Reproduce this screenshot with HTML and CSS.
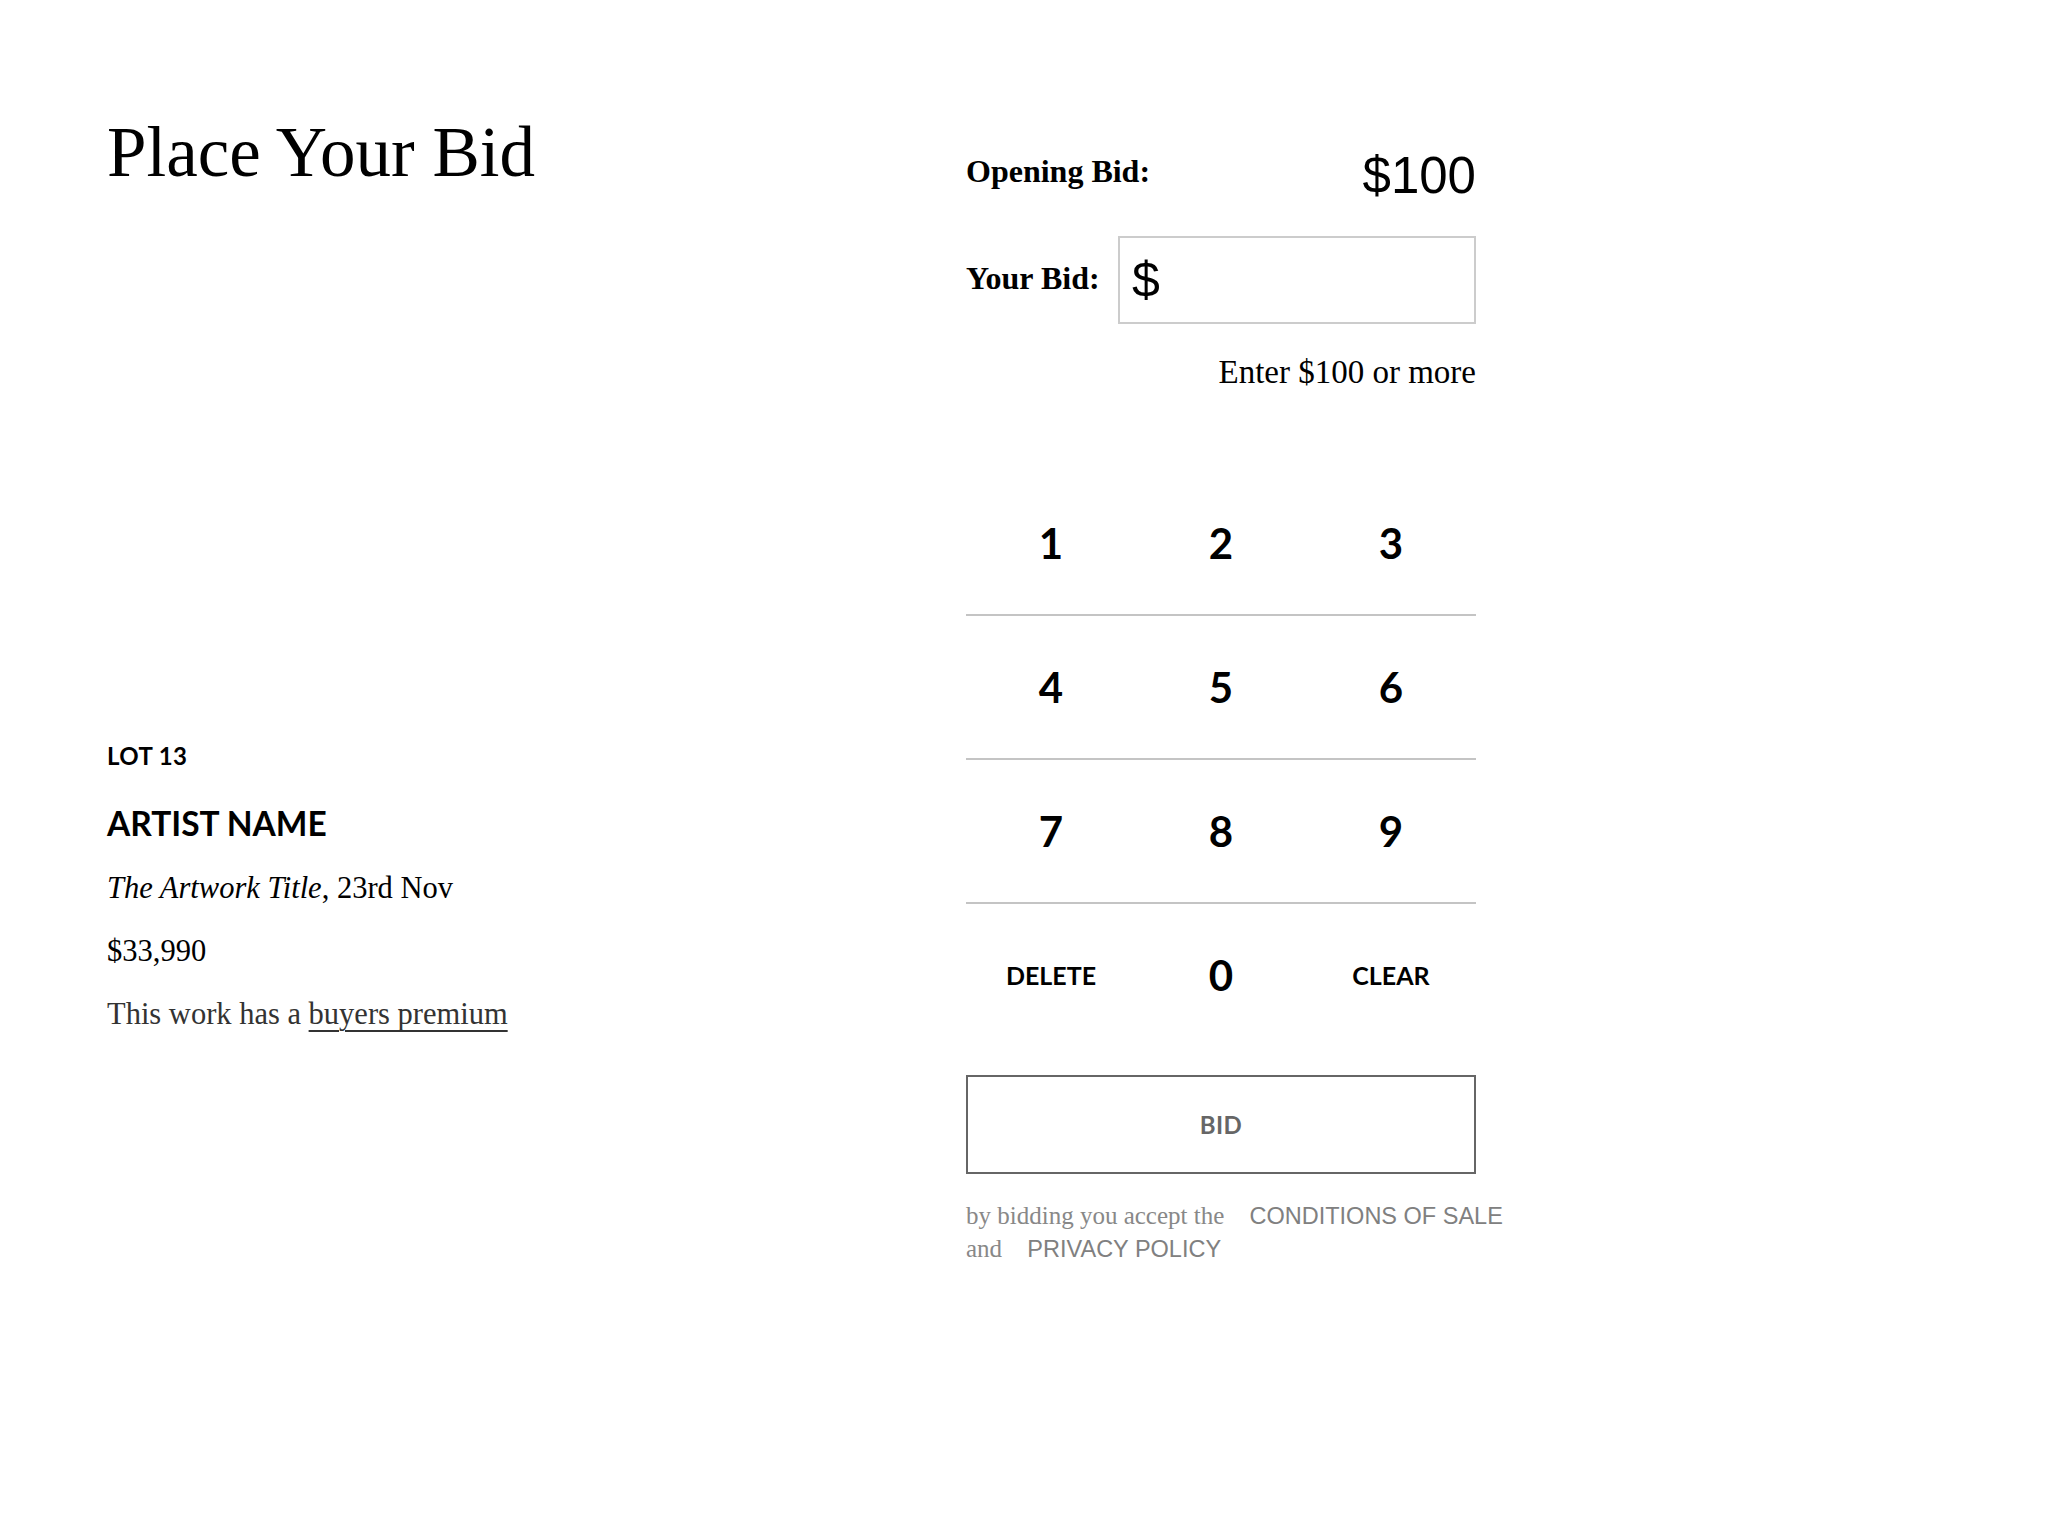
FILE: index.html
```html
<!DOCTYPE html>
<html lang="en">
<head>
<meta charset="utf-8">
<title>Place Your Bid</title>
<link rel="stylesheet" href="styles.css">
</head>
<body>
<div class="page">
  <section class="lot-col">
    <h1 class="title">Place Your Bid</h1>
    <div class="lot-info">
      <div class="lot-no">LOT 13</div>
      <div class="artist">ARTIST NAME</div>
      <p class="line"><em>The Artwork Title</em>, 23rd Nov</p>
      <p class="line">$33,990</p>
      <p class="line premium">This work has a <a href="#" class="premium-link">buyers premium</a></p>
    </div>
  </section>
  <section class="bid-col">
    <div class="opening-row">
      <span class="row-label">Opening Bid:</span>
      <span class="opening-amount">$100</span>
    </div>
    <div class="your-row">
      <span class="row-label your-label">Your Bid:</span>
      <div class="bid-input"><span class="currency">$</span></div>
    </div>
    <div class="hint">Enter $100 or more</div>
    <div class="keypad">
      <div class="key-row">
        <button class="key">1</button>
        <button class="key">2</button>
        <button class="key">3</button>
      </div>
      <div class="key-row">
        <button class="key">4</button>
        <button class="key">5</button>
        <button class="key">6</button>
      </div>
      <div class="key-row">
        <button class="key">7</button>
        <button class="key">8</button>
        <button class="key">9</button>
      </div>
      <div class="key-row last">
        <button class="key key-word">DELETE</button>
        <button class="key">0</button>
        <button class="key key-word">CLEAR</button>
      </div>
    </div>
    <button class="bid-btn">BID</button>
    <div class="terms">by bidding you accept the <a href="#" class="terms-link">CONDITIONS OF SALE</a> and <a href="#" class="terms-link">PRIVACY POLICY</a></div>
  </section>
</div>
</body>
</html>
```

FILE: styles.css
```css
html, body {
  margin: 0;
  padding: 0;
  background: #ffffff;
}

body {
  font-family: "Liberation Serif", "Times New Roman", serif;
  color: #000000;
}

.page {
  display: flex;
  padding: 0 0 0 107px;
}

.lot-col {
  width: 859px;
  display: flex;
  flex-direction: column;
  padding-top: 112px;
}

.title {
  margin: 0;
  font-size: 71px;
  line-height: 80px;
  font-weight: 400;
}

.lot-info {
  margin-top: 549px;
}

.lot-no {
  font-family: "Lato", "Liberation Sans", sans-serif;
  font-weight: 700;
  font-size: 24px;
  line-height: 30px;
  letter-spacing: 0.4px;
}

.artist {
  margin-top: 32px;
  font-family: "Lato", "Liberation Sans", sans-serif;
  font-weight: 700;
  font-size: 33.5px;
  line-height: 40px;
  letter-spacing: 0;
}

.line {
  margin: 0;
  font-size: 30.5px;
  line-height: 63px;
}

.artist + .line {
  margin-top: 14px;
}

.premium {
  color: #333333;
}

.premium-link {
  color: #333333;
  text-decoration: underline;
  text-decoration-thickness: 2px;
  text-underline-offset: 6px;
}

.bid-col {
  width: 510px;
  padding-top: 141px;
  display: flex;
  flex-direction: column;
}

.opening-row {
  display: flex;
  justify-content: space-between;
  align-items: flex-start;
  height: 60px;
}

.row-label {
  font-size: 32px;
  font-weight: 700;
  line-height: 60px;
}

.opening-amount {
  font-family: "Liberation Sans", Arial, sans-serif;
  font-size: 51px;
  line-height: 60px;
  padding-top: 5px;
}

.your-row {
  margin-top: 35px;
  display: flex;
  align-items: center;
  justify-content: space-between;
}

.your-label {
  line-height: 40px;
  padding-bottom: 4px;
}

.bid-input {
  box-sizing: border-box;
  width: 358px;
  height: 88px;
  border: 2px solid #cccccc;
  display: flex;
  align-items: center;
  padding-left: 12px;
}

.currency {
  font-family: "Liberation Sans", Arial, sans-serif;
  font-size: 50px;
  line-height: 1;
}

.hint {
  margin-top: 28px;
  text-align: right;
  font-size: 33px;
  line-height: 40px;
}

.keypad {
  margin-top: 80px;
  display: flex;
  flex-direction: column;
}

.key-row {
  display: grid;
  grid-template-columns: repeat(3, 1fr);
  height: 142px;
  border-bottom: 2px solid #c4c4c4;
}

.key-row.last {
  border-bottom: none;
}

.key {
  background: none;
  border: none;
  padding: 0;
  margin: 0;
  font-family: "Lato", "Liberation Sans", sans-serif;
  font-weight: 700;
  font-size: 42px;
  color: #000000;
  display: flex;
  align-items: center;
  justify-content: center;
}

.key-word {
  font-size: 25px;
  letter-spacing: 0;
}

.bid-btn {
  margin-top: 29px;
  box-sizing: border-box;
  width: 510px;
  height: 99px;
  background: #ffffff;
  border: 2px solid #666666;
  font-family: "Lato", "Liberation Sans", sans-serif;
  font-weight: 700;
  font-size: 24px;
  color: #666666;
  letter-spacing: 0.5px;
}

.terms {
  margin-top: 25px;
  width: 545px;
  font-size: 25px;
  line-height: 33px;
  color: #888888;
}

.terms-link {
  display: inline-block;
  margin-left: 19px;
  font-family: "Liberation Sans", Arial, sans-serif;
  font-size: 23.5px;
  line-height: 24px;
  color: #808080;
  text-decoration: none;
  white-space: nowrap;
}
```
